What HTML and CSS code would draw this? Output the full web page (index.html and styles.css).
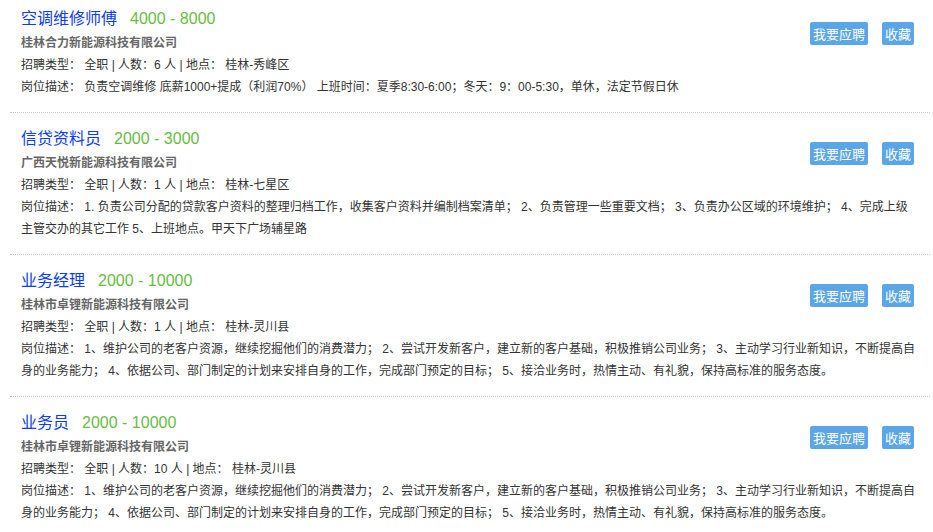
FILE: index.html
```html
<!DOCTYPE html>
<html>

<head>
  <meta charset="utf-8">
  <meta name="viewport" content="width=device-width, initial-scale=1">
  <link rel="stylesheet" href="styles.css">
</head>

<body>

  <div class="job-list">

    <div class="job">
      <div class="job-head">
        <div class="job-info">
          <div class="job-title"><a href="#">空调维修师傅</a><span class="salary">4000 - 8000</span></div>
          <div class="company">桂林合力新能源科技有限公司</div>
          <div class="meta">招聘类型： 全职 | 人数：6 人 | 地点： 桂林-秀峰区</div>
        </div>
        <div class="actions">
          <button class="btn">我要应聘</button>
          <button class="btn">收藏</button>
        </div>
      </div>
      <div class="desc">岗位描述： 负责空调维修 底薪1000+提成（利润70%） 上班时间：夏季8:30-6:00；冬天：9：00-5:30，单休，法定节假日休</div>
    </div>

    <div class="job">
      <div class="job-head">
        <div class="job-info">
          <div class="job-title"><a href="#">信贷资料员</a><span class="salary">2000 - 3000</span></div>
          <div class="company">广西天悦新能源科技有限公司</div>
          <div class="meta">招聘类型： 全职 | 人数：1 人 | 地点： 桂林-七星区</div>
        </div>
        <div class="actions">
          <button class="btn">我要应聘</button>
          <button class="btn">收藏</button>
        </div>
      </div>
      <div class="desc">岗位描述： 1. 负责公司分配的贷款客户资料的整理归档工作，收集客户资料并编制档案清单； 2、负责管理一些重要文档； 3、负责办公区域的环境维护； 4、完成上级主管交办的其它工作 5、上班地点。甲天下广场辅星路</div>
    </div>

    <div class="job">
      <div class="job-head">
        <div class="job-info">
          <div class="job-title"><a href="#">业务经理</a><span class="salary">2000 - 10000</span></div>
          <div class="company">桂林市卓锂新能源科技有限公司</div>
          <div class="meta">招聘类型： 全职 | 人数：1 人 | 地点： 桂林-灵川县</div>
        </div>
        <div class="actions">
          <button class="btn">我要应聘</button>
          <button class="btn">收藏</button>
        </div>
      </div>
      <div class="desc">岗位描述： 1、维护公司的老客户资源，继续挖掘他们的消费潜力； 2、尝试开发新客户，建立新的客户基础，积极推销公司业务； 3、主动学习行业新知识，不断提高自身的业务能力； 4、依据公司、部门制定的计划来安排自身的工作，完成部门预定的目标； 5、接洽业务时，热情主动、有礼貌，保持高标准的服务态度。</div>
    </div>

    <div class="job">
      <div class="job-head">
        <div class="job-info">
          <div class="job-title"><a href="#">业务员</a><span class="salary">2000 - 10000</span></div>
          <div class="company">桂林市卓锂新能源科技有限公司</div>
          <div class="meta">招聘类型： 全职 | 人数：10 人 | 地点： 桂林-灵川县</div>
        </div>
        <div class="actions">
          <button class="btn">我要应聘</button>
          <button class="btn">收藏</button>
        </div>
      </div>
      <div class="desc">岗位描述： 1、维护公司的老客户资源，继续挖掘他们的消费潜力； 2、尝试开发新客户，建立新的客户基础，积极推销公司业务； 3、主动学习行业新知识，不断提高自身的业务能力； 4、依据公司、部门制定的计划来安排自身的工作，完成部门预定的目标； 5、接洽业务时，热情主动、有礼貌，保持高标准的服务态度。</div>
    </div>

  </div>

</body>

</html>
```

FILE: styles.css
```css
body {
  margin: 0;
  font-family: "Liberation Sans", "Noto Sans CJK SC", sans-serif;
  font-size: 12px;
  color: #333;
  background: #fff;
}

.job-list {
  margin: 0 3px 0 10px;
}

.job {
  padding: 9px 12px 14px 11px;
  border-bottom: 1px dotted #c8c8c8;
}

.job:first-child {
  padding-top: 2px;
}

.job-head {
  display: flex;
  justify-content: space-between;
  align-items: flex-start;
}

.job-title {
  padding-top: 4px;
  font-size: 16px;
  line-height: 26px;
}

.job-title a {
  color: #0a3cff;
  text-decoration: none;
}

.salary {
  margin-left: 13px;
  color: #68bc3f;
}

.company {
  line-height: 22px;
  font-weight: bold;
  color: #666;
}

.meta,
.desc {
  line-height: 22px;
}

.actions {
  display: flex;
  gap: 14px;
  margin-top: 20px;
  margin-right: 4px;
}

.btn {
  height: 23px;
  padding: 0 3px;
  border: none;
  border-radius: 2px;
  background-color: #5ba6e6;
  color: #fff;
  font-family: "Noto Sans CJK SC", sans-serif;
  font-size: 13px;
  cursor: pointer;
}

.btn:hover {
  opacity: 0.8;
}
```
